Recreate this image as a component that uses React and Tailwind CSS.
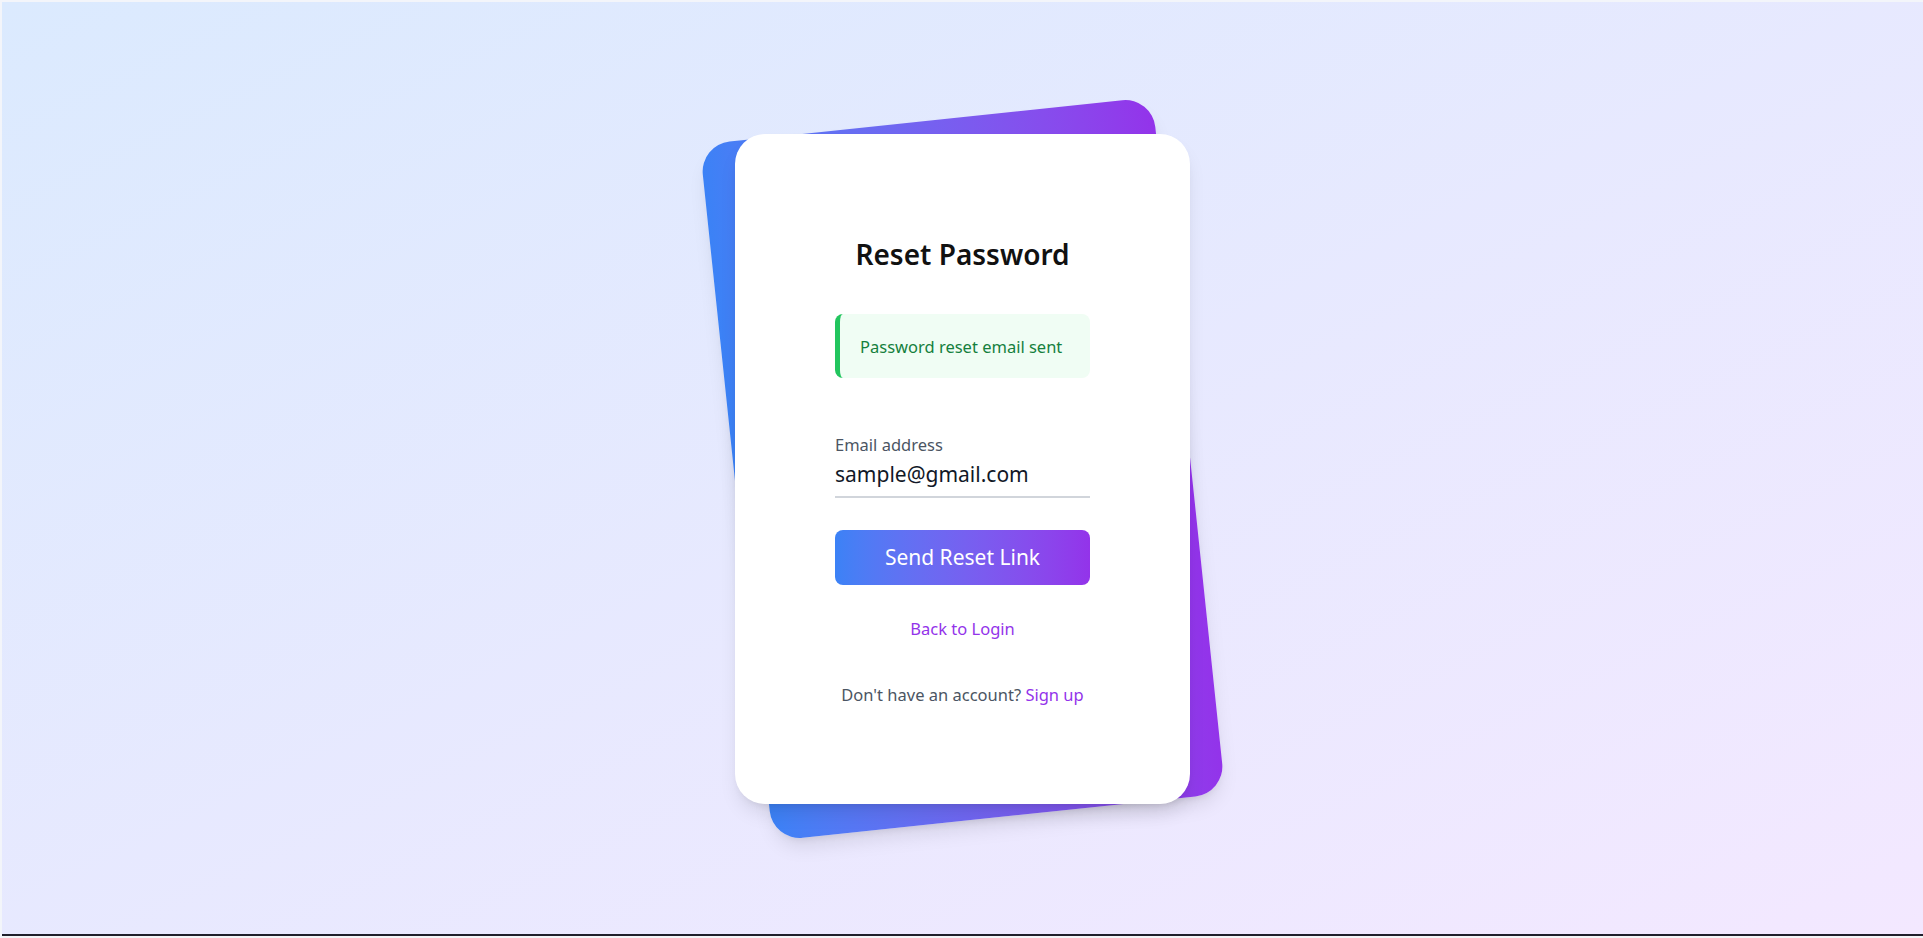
import { useState } from "react";

export default function App() {
  const [email, setEmail] = useState("sample@gmail.com");

  return (
    <div className="h-[938px] w-full flex flex-col border-t-2 border-l-2 border-[#f3f5fa] font-['Noto_Sans',sans-serif]">
      <main className="flex-1 flex items-center justify-center pt-[2px] bg-gradient-to-br from-[#dbeafe] to-[#f3e8ff]">
        <div className="relative w-[455px] py-[15px]">
          {/* tilted gradient card behind */}
          <div className="absolute inset-0 rounded-[30px] bg-gradient-to-r from-[#3b82f6] to-[#9333ea] -rotate-6 shadow-[0_12px_20px_-4px_rgba(0,0,0,0.1),0_5px_8px_-5px_rgba(0,0,0,0.1)]" />

          <div className="relative h-[670px] bg-white rounded-[30px] px-[100px] pt-[100px] shadow-[0_12px_20px_-4px_rgba(0,0,0,0.1),0_5px_8px_-5px_rgba(0,0,0,0.1)]">
            <h1 className="text-[28px] leading-[40px] font-semibold text-[#111] text-center">Reset Password</h1>

            <div className="mt-[40px] h-[64px] px-[20px] pt-[21px] pb-[19px] bg-[#f0fdf4] border-l-[5px] border-[#22c55e] rounded-[8px] text-[16.5px] leading-[24px] text-[#15803d]">
              Password reset email sent
            </div>

            <label htmlFor="email" className="block mt-[54px] text-[16.5px] leading-[25px] text-[#4b5563]">Email address</label>
            <input
              id="email"
              type="email"
              value={email}
              onChange={(e) => setEmail(e.target.value)}
              className="block w-full mt-[1px] h-[40px] pt-0 pb-[7px] border-b-2 border-[#d1d5db] bg-transparent text-[21px] text-[#111827] focus:outline-none"
            />

            <button className="mt-[32px] w-full h-[55px] flex items-center justify-center rounded-[8px] bg-gradient-to-r from-[#3b82f6] to-[#9333ea] text-white text-[21px]">
              Send Reset Link
            </button>

            <div className="mt-[31px] text-center text-[16.5px] leading-[25px]">
              <a href="#" className="text-[#9333ea]">Back to Login</a>
            </div>

            <p className="mt-[41px] text-center text-[16.5px] leading-[25px] text-[#4b5563]">
              Don't have an account? <a href="#" className="text-[#9333ea]">Sign up</a>
            </p>
          </div>
        </div>
      </main>
      <div className="h-[2px] bg-[#1f1f2b]" />
      <div className="h-[2px] bg-[#f4f4f6]" />
    </div>
  );
}
